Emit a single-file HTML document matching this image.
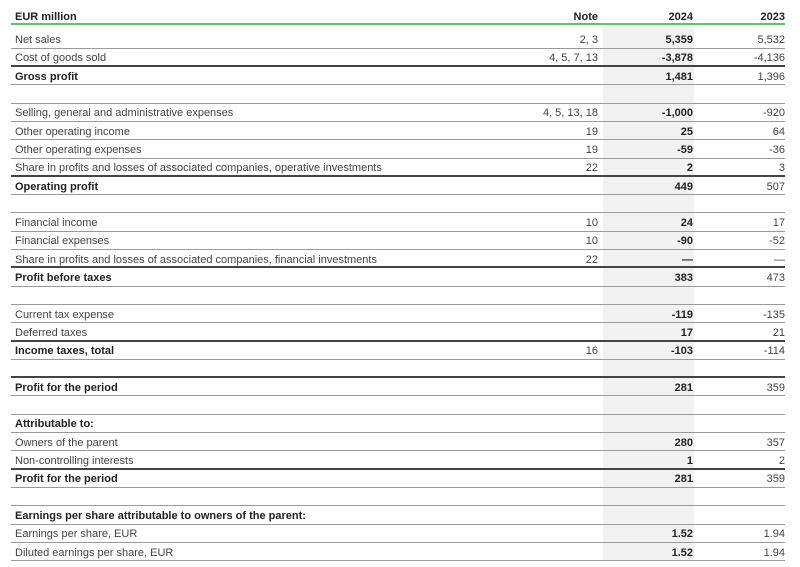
<!DOCTYPE html>
<html><head><meta charset="utf-8"><style>
body{margin:0;width:800px;height:567px;background:#fff;font-family:"Liberation Sans",sans-serif;font-size:11px;color:#444;position:relative;overflow:hidden}
.shade{position:absolute;left:603px;top:25px;width:91px;height:535px;background:#f2f2f2}
.hdr{position:absolute;left:11px;top:0;width:774px;height:23px;border-bottom:2px solid #5cc55c;font-weight:bold;color:#222}
.r{position:absolute;left:11px;width:774px;height:18.3px;box-sizing:border-box;border-bottom:1px solid #9a9a9a}
.r span,.hdr span{position:absolute;top:50%;transform:translateY(-40%);white-space:nowrap}
.l{left:4px}.n{right:187px}.a{right:92px;font-weight:bold;color:#222}.b{right:0}
.t{border-top:2px solid #444}
.t .l,.bh .l{font-weight:bold;color:#222}
</style></head><body>
<div class="shade"></div>
<div class="hdr"><span class="l" style="top:16px">EUR million</span><span class="n" style="top:16px">Note</span><span class="a" style="top:16px">2024</span><span class="b" style="top:16px">2023</span></div>
<div id="rows"></div>
<script>
var rows=[
["Net sales","2, 3","5,359","5,532"],
["Cost of goods sold","4, 5, 7, 13","-3,878","-4,136"],
["Gross profit","","1,481","1,396","t"],
["","","","",""],
["Selling, general and administrative expenses","4, 5, 13, 18","-1,000","-920"],
["Other operating income","19","25","64"],
["Other operating expenses","19","-59","-36"],
["Share in profits and losses of associated companies, operative investments","22","2","3"],
["Operating profit","","449","507","t"],
["","","","",""],
["Financial income","10","24","17"],
["Financial expenses","10","-90","-52"],
["Share in profits and losses of associated companies, financial investments","22","—","—"],
["Profit before taxes","","383","473","t"],
["","","","",""],
["Current tax expense","","-119","-135"],
["Deferred taxes","","17","21"],
["Income taxes, total","16","-103","-114","t"],
["","","","",""],
["Profit for the period","","281","359","t"],
["","","","",""],
["Attributable to:","","","","bh"],
["Owners of the parent","","280","357"],
["Non-controlling interests","","1","2"],
["Profit for the period","","281","359","t"],
["","","","",""],
["Earnings per share attributable to owners of the parent:","","","","bh"],
["Earnings per share, EUR","","1.52","1.94"],
["Diluted earnings per share, EUR","","1.52","1.94"]];
var h="";
rows.forEach(function(r,i){var top=30.5+i*18.3;var cls=r[4]||"";
if(cls=="t")top-=2;
h+='<div class="r '+cls+'" style="top:'+top+'px;'+(cls=="t"?'height:20.3px':'')+'"><span class="l">'+r[0]+'</span><span class="n">'+r[1]+'</span><span class="a">'+r[2]+'</span><span class="b">'+r[3]+'</span></div>';});
document.getElementById("rows").innerHTML=h;
</script>
</body></html>
